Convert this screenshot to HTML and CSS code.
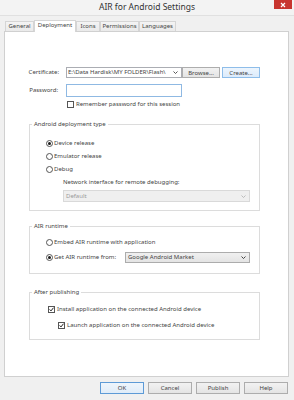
FILE: index.html
```html
<!DOCTYPE html>
<html>
<head>
<meta charset="utf-8">
<title>AIR for Android Settings</title>
<link rel="stylesheet" href="styles.css">
</head>
<body>
<div class="window">
  <div class="titlebar">
    <span></span>
    <span class="title">AIR for Android Settings</span>
    <span class="close-wrap"><span class="close"><svg width="6" height="6" viewBox="0 0 6 6"><path d="M1 1 L5 5 M5 1 L1 5" stroke="#fff" stroke-width="1.2"/></svg></span></span>
  </div>
  <div class="tabs">
    <span class="tab t-general">General</span>
    <span class="tab active t-deploy">Deployment</span>
    <span class="tab t-icons">Icons</span>
    <span class="tab t-perm">Permissions</span>
    <span class="tab t-lang">Languages</span>
  </div>
  <div class="panel">
    <div class="form">
      <span class="lbl">Certificate:</span>
      <div class="row1">
        <div class="combo"><span class="combo-text">E:\Data Hardisk\MY FOLDER\Flash\</span><svg class="arrow" width="5" height="3" viewBox="0 0 5 3"><path d="M0.5 0.5 L2.5 2.5 L4.5 0.5" fill="none" stroke="#444" stroke-width="0.9"/></svg></div>
        <span class="btn browse">Browse...</span>
        <span class="btn create">Create...</span>
      </div>
      <span class="lbl pw">Password:</span>
      <div class="input"></div>
      <span></span>
      <div class="check-row remember"><span class="checkbox"></span><span>Remember password for this session</span></div>
    </div>

    <fieldset class="group g1">
      <legend>Android deployment type</legend>
      <div class="content">
        <div class="radio-row"><span class="radio on"></span><span>Device release</span></div>
        <div class="radio-row"><span class="radio"></span><span>Emulator release</span></div>
        <div class="radio-row"><span class="radio"></span><span>Debug</span></div>
        <div class="net-label">Network interface for remote debugging:</div>
        <div class="select disabled net-select"><span>Default</span><svg width="5" height="3" viewBox="0 0 5 3"><path d="M0.5 0.5 L2.5 2.5 L4.5 0.5" fill="none" stroke="#b5b5b5" stroke-width="0.9"/></svg></div>
      </div>
    </fieldset>

    <fieldset class="group g2">
      <legend>AIR runtime</legend>
      <div class="content">
        <div class="radio-row"><span class="radio"></span><span>Embed AIR runtime with application</span></div>
        <div class="radio-row get-row">
          <span class="get-label"><span class="radio on"></span><span>Get AIR runtime from:</span></span>
          <div class="select market"><span>Google Android Market</span><svg width="5" height="3" viewBox="0 0 5 3"><path d="M0.5 0.5 L2.5 2.5 L4.5 0.5" fill="none" stroke="#333" stroke-width="0.9"/></svg></div>
        </div>
      </div>
    </fieldset>

    <fieldset class="group g3">
      <legend>After publishing</legend>
      <div class="content">
        <div class="check-row"><span class="checkbox"><svg width="5" height="5" viewBox="0 0 5 5"><path d="M0.6 2.4 L2 3.9 L4.5 0.7" fill="none" stroke="#222" stroke-width="1"/></svg></span><span>Install application on the connected Android device</span></div>
        <div class="check-row sub"><span class="checkbox"><svg width="5" height="5" viewBox="0 0 5 5"><path d="M0.6 2.4 L2 3.9 L4.5 0.7" fill="none" stroke="#222" stroke-width="1"/></svg></span><span>Launch application on the connected Android device</span></div>
      </div>
    </fieldset>
  </div>
  <div class="buttons">
    <span class="btn default">OK</span>
    <span class="btn">Cancel</span>
    <span class="btn">Publish</span>
    <span class="btn">Help</span>
  </div>
</div>
</body>
</html>
```

FILE: styles.css
```css
html, body {
  margin: 0;
  padding: 0;
}
body {
  font-family: "Noto Sans", "Open Sans", sans-serif;
  font-size: 6px;
  color: #444;
}
.window {
  width: 294px;
  height: 400px;
  background: #f0f0f0;
  display: flex;
  flex-direction: column;
  overflow: hidden;
}
.titlebar {
  height: 15px;
  border-bottom: 1px solid #e0e0e0;
  background: #f3f3f3;
  display: grid;
  grid-template-columns: 1fr auto 1fr;
}
.title {
  font-size: 8.5px;
  line-height: 13px;
  color: #333;
}
.close-wrap {
  display: flex;
  justify-content: flex-end;
  align-items: flex-start;
  padding-right: 2px;
}
.close {
  width: 18px;
  height: 9px;
  background: #c8352f;
  display: flex;
  align-items: center;
  justify-content: center;
}
.tabs {
  display: flex;
  align-items: flex-end;
  height: 11px;
  margin: 4px 0 0 5px;
  position: relative;
  z-index: 1;
}
.tab {
  box-sizing: border-box;
  height: 10px;
  border: 1px solid #d5d5d5;
  border-bottom: none;
  background: linear-gradient(#f4f4f4, #eaeaea);
  text-align: center;
  line-height: 9px;
  white-space: nowrap;
}
.tab.active {
  height: 12px;
  background: #fff;
  margin-bottom: -1px;
  line-height: 9px;
}
.t-general { width: 29px; }
.t-deploy { width: 42px; }
.t-icons { width: 24px; }
.t-perm { width: 39px; }
.t-lang { width: 37px; }
.panel {
  margin: 0 5px 0 4px;
  height: 346px;
  box-sizing: border-box;
  border: 1px solid #d0d0d0;
  background: #fff;
  padding-top: 35px;
}
.form {
  display: grid;
  grid-template-columns: 54px 1fr;
  column-gap: 7px;
  align-items: center;
}
.lbl {
  text-align: right;
  line-height: 9px;
}
.lbl.pw {
  margin-top: 6px;
  padding-right: 1px;
}
.row1 {
  display: flex;
  height: 11px;
}
.combo {
  box-sizing: border-box;
  width: 116px;
  height: 11px;
  border: 1px solid #abadb3;
  background: #fff;
  display: flex;
  align-items: center;
  padding-left: 1px;
  overflow: hidden;
}
.combo-text {
  flex: 1;
  overflow: hidden;
  white-space: nowrap;
  line-height: 9px;
}
.arrow {
  margin: 0 3px 0 3px;
  flex: none;
}
.btn {
  box-sizing: border-box;
  height: 11px;
  width: 38px;
  border: 1px solid #adadad;
  background: linear-gradient(#f2f2f2, #e4e4e4);
  display: flex;
  align-items: center;
  justify-content: center;
  white-space: nowrap;
}
.btn.create {
  margin-left: 2px;
  border-color: #8ebde9;
  background: linear-gradient(#edf5fd, #dcebfb);
}
.input {
  box-sizing: border-box;
  width: 116px;
  height: 13px;
  margin-top: 6px;
  border: 1px solid #8fb9e3;
  background: #fff;
}
.check-row {
  display: flex;
  align-items: center;
  gap: 2px;
  height: 9px;
  line-height: 9px;
}
.remember {
  height: 7px;
  margin-top: 4px;
  margin-left: 1px;
}
.checkbox {
  box-sizing: border-box;
  width: 7px;
  height: 7px;
  border: 1px solid #555;
  background: #fff;
  display: flex;
  align-items: center;
  justify-content: center;
  flex: none;
}
.group {
  box-sizing: border-box;
  width: 231px;
  margin: 0 0 0 24px;
  padding: 0;
  min-width: 0;
  border: 1px solid #dcdcdc;
}
.group legend {
  margin-left: 2px;
  padding: 0 2px;
  line-height: 9px;
  font-size: 6px;
}
.g1 { margin-top: 12px; }
.g2 { margin-top: 11px; }
.g3 { margin-top: 14px; }
.content {
  display: flex;
  flex-direction: column;
  align-items: flex-start;
}
.g1 .content { padding: 10px 0 8px 16px; gap: 4px; }
.g2 .content { padding: 7px 0 10px 16px; gap: 5px; }
.g3 .content { padding: 8px 0 9px 18px; gap: 7px; }
.radio-row {
  display: flex;
  align-items: center;
  gap: 1px;
  height: 9px;
  line-height: 9px;
}
.radio {
  box-sizing: border-box;
  width: 7px;
  height: 7px;
  border: 1px solid #555;
  border-radius: 50%;
  background: #fff;
  display: flex;
  align-items: center;
  justify-content: center;
  flex: none;
}
.radio.on::after {
  content: "";
  width: 3px;
  height: 3px;
  border-radius: 50%;
  background: #1a1a1a;
}
.net-label {
  margin-left: 17px;
  line-height: 9px;
}
.select {
  box-sizing: border-box;
  display: flex;
  align-items: center;
  justify-content: space-between;
  white-space: nowrap;
}
.net-select {
  width: 187px;
  height: 12px;
  margin-left: 17px;
  margin-top: -1px;
  border: 1px solid #d9d9d9;
  background: #efefef;
  color: #9a9a9a;
  padding: 0 3px 0 2px;
}
.get-row {
  height: 11px;
}
.get-label {
  display: flex;
  align-items: center;
  gap: 1px;
  width: 78px;
}
.market {
  width: 125px;
  height: 11px;
  border: 1px solid #acacac;
  background: linear-gradient(#f0f0f0, #e4e4e4);
  padding: 0 3px 0 2px;
}
.check-row.sub {
  margin-left: 10px;
}
.buttons {
  display: flex;
  justify-content: flex-end;
  gap: 4px;
  margin: 5px 6px 0 0;
}
.buttons .btn {
  width: 44px;
  height: 12px;
}
.btn.default {
  border-color: #5d9ad6;
  background: linear-gradient(#eef5fc, #e0ecf8);
}
```
